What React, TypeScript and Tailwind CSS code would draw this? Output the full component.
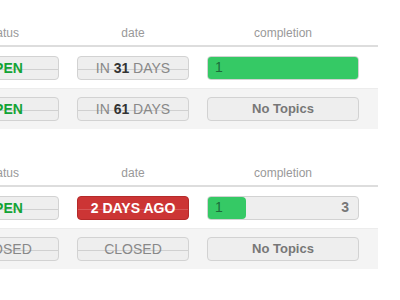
import React from 'react';

type Row = {
  status: 'open' | 'closed';
  date: React.ReactNode;
  dateTone?: 'late';
  done?: number;
  total?: number;
  fill?: number;
};

const tables: Row[][] = [
  [
    { status: 'open', date: <>IN <b className="text-[#333]">31</b> DAYS</>, done: 1, total: 1, fill: 100 },
    { status: 'open', date: <>IN <b className="text-[#333]">61</b> DAYS</> },
  ],
  [
    { status: 'open', date: '2 DAYS AGO', dateTone: 'late', done: 1, total: 3, fill: 25 },
    { status: 'closed', date: 'CLOSED' },
  ],
];

function Badge({ children, tone = 'plain' }: { children: React.ReactNode; tone?: 'plain' | 'red' }) {
  const red = tone === 'red';
  return (
    <div
      className={`relative h-[24px] w-[112px] rounded-[4px] border flex items-center justify-center text-[14px] leading-none ${
        red ? 'bg-[#cc3535] border-[#b52a2a] text-white font-bold' : 'bg-[#eeeeee] border-[#d2d2d2] text-[#888]'
      }`}
    >
      <span className={`absolute left-0 right-0 top-[12px] h-px ${red ? 'bg-[#d65656]' : 'bg-[#d0d0d0]'}`} />
      <span className="relative">{children}</span>
    </div>
  );
}

function Completion({ done, total, fill }: { done?: number; total?: number; fill?: number }) {
  if (!total) {
    return (
      <div className="h-[24px] w-[152px] rounded-[4px] border border-[#d2d2d2] bg-[#eeeeee] flex items-center justify-center text-[13px] font-bold text-[#777]">
        No Topics
      </div>
    );
  }
  const full = done === total;
  return (
    <div className="relative h-[24px] w-[152px] rounded-[4px] border border-[#d2d2d2] bg-[#eeeeee] overflow-hidden flex items-center text-[14px]">
      <div
        className={`absolute left-0 top-0 bottom-0 bg-[#35c965] ${full ? '' : 'rounded-r-[4px]'}`}
        style={{ width: `${fill ?? 0}%` }}
      />
      <span className="relative pl-[7px] text-[#1d6b3a]">{done}</span>
      {!full && <span className="relative ml-auto pr-[9px] font-bold text-[#777]">{total}</span>}
    </div>
  );
}

export default function App() {
  return (
    <div className="w-[400px] h-[300px] overflow-hidden bg-white" style={{ fontFamily: '"Liberation Sans", Arial, sans-serif' }}>
      <div className="ml-[-62px] w-[440px]">
        {tables.map((rows, t) => (
          <div key={t} className={t ? 'mt-[11px]' : ''}>
            <div className="flex h-[47px] items-end pb-[4px] text-[12px] leading-[16px] text-[#999] border-b-2 border-[#dddddd]">
              <div className="w-[130px] text-center">status</div>
              <div className="w-[130px] text-center">date</div>
              <div className="w-[170px] text-center">completion</div>
            </div>
            {rows.map((r, i) => (
              <div
                key={i}
                className={`flex h-[41px] items-center border-t border-[#ececec] ${i % 2 ? 'bg-[#f4f4f4]' : 'bg-white'} ${i === 0 ? 'border-t-0 h-[41px]' : ''}`}
              >
                <div className="w-[130px] px-[9px]">
                  <Badge>
                    {r.status === 'open' ? (
                      <span className="font-bold text-[#13a335]">OPEN</span>
                    ) : (
                      <span>CLOSED</span>
                    )}
                  </Badge>
                </div>
                <div className="w-[130px] px-[9px]">
                  <Badge tone={r.dateTone === 'late' ? 'red' : 'plain'}>{r.date}</Badge>
                </div>
                <div className="w-[170px] px-[9px]">
                  <Completion done={r.done} total={r.total} fill={r.fill} />
                </div>
              </div>
            ))}
          </div>
        ))}
      </div>
    </div>
  );
}
